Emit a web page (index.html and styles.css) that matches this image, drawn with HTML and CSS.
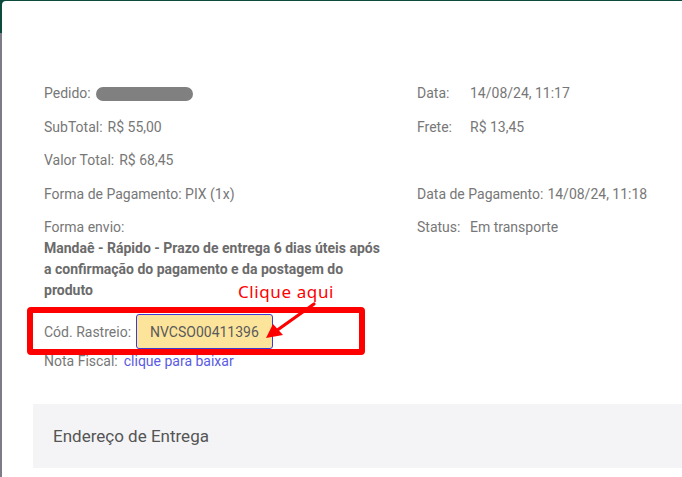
FILE: index.html
```html
<!DOCTYPE html>
<html lang="pt-BR">
<head>
  <meta charset="UTF-8" />
  <meta name="viewport" content="width=device-width, initial-scale=1.0"/>
  <title>Detalhes do Pedido</title>
  <link rel="stylesheet" href="styles.css">
</head>
<body>

  <div class="page">
    <!-- backdrop strip on the left -->
    <div class="backdrop"></div>

    <!-- ===== ORDER MODAL ===== -->
    <div class="modal">

      <div class="info">
        <div class="item">
          <span class="label">Pedido:</span>
          <span class="hidden-value"></span>
        </div>
        <div class="item right">
          <span class="label">Data:</span>
          <span>14/08/24, 11:17</span>
        </div>

        <div class="item">
          <span class="label">SubTotal:</span>
          <span>R$ 55,00</span>
        </div>
        <div class="item right">
          <span class="label">Frete:</span>
          <span>R$ 13,45</span>
        </div>

        <div class="item">
          <span class="label">Valor Total:</span>
          <span>R$ 68,45</span>
        </div>
        <div class="item right"></div>

        <div class="envio-label">Forma de Pagamento: PIX (1x)</div>
        <div class="item right">
          <span class="label">Data de Pagamento:</span>
          <span>14/08/24, 11:18</span>
        </div>

        <div class="envio">
          Forma envio:<br>
          <strong>Mandaê - Rápido - Prazo de entrega 6 dias úteis após a confirmação do pagamento e da postagem do produto</strong>
        </div>
        <div class="item right">
          <span class="label">Status:</span>
          <span>Em transporte</span>
        </div>
      </div>

      <div class="rastreio">
        <span class="label">Cód. Rastreio:</span>
        <button class="track-btn">NVCSO00411396</button>

        <!-- annotation over the screenshot -->
        <div class="highlight-box"></div>
        <span class="hint">Clique aqui</span>
        <svg class="hint-arrow" width="60" height="45" viewBox="0 0 60 45">
          <line x1="52" y1="3" x2="14" y2="30" stroke="#ff0000" stroke-width="3.2" stroke-linecap="round"/>
          <polygon points="4,37 11,23 21,34" fill="#ff0000"/>
        </svg>
      </div>

      <div class="item nota">
        <span class="label">Nota Fiscal:</span>
        <a href="#">clique para baixar</a>
      </div>

      <div class="section-title">Endereço de Entrega</div>
    </div>
  </div>

</body>
</html>
```

FILE: styles.css
```css
* {
  box-sizing: border-box;
  margin: 0;
  padding: 0;
}

body {
  font-family: Roboto, 'Liberation Sans', sans-serif;
  font-size: 14px;
  color: #777;
  background: #0b4a3c;
  height: 100vh;
  overflow: hidden;
}

.page {
  display: flex;
  height: 100%;
}

.backdrop {
  width: 2px;
  flex-shrink: 0;
  background: linear-gradient(to bottom, #0b4a3c 33px, #7d7b87 33px);
}

/* ===== MODAL ===== */
.modal {
  flex: 1;
  margin-top: 1px;
  background: white;
  border-radius: 4px 0 0 0;
  padding: 82px 0 0 31px;
}

.info {
  display: grid;
  grid-template-columns: 373px 1fr;
  align-items: start;
  row-gap: 12.5px;
  line-height: 21px;
  padding-left: 11px;
}

.item {
  display: flex;
  align-items: center;
  gap: 5px;
  white-space: nowrap;
}

.item.right {
  gap: 4px;
}

.item.right .label {
  min-width: 49px;
}

.hidden-value {
  display: inline-block;
  width: 97px;
  height: 14px;
  border-radius: 7px;
  background: #808080;
}

.envio {
  width: 340px;
}

.envio strong {
  color: #6b6b6b;
  font-weight: bold;
}

/* ===== TRACKING ROW ===== */
.rastreio {
  position: relative;
  display: flex;
  align-items: center;
  gap: 5px;
  margin: 13px 0 0 11px;
  height: 35px;
}

.track-btn {
  height: 35px;
  padding: 0 13px;
  background: #fde49b;
  border: 1px solid #3c3cd4;
  border-radius: 3px;
  font-family: Roboto, 'Liberation Sans', sans-serif;
  font-size: 14px;
  color: #5a5a5a;
  cursor: pointer;
}

.highlight-box {
  position: absolute;
  left: -17px;
  top: -7px;
  width: 338px;
  height: 48px;
  border: 6px solid #ff0000;
  border-radius: 4px;
}

.hint {
  position: absolute;
  left: 194px;
  top: -31px;
  font-family: 'Noto Sans', 'DejaVu Sans', sans-serif;
  font-size: 17px;
  letter-spacing: 0.6px;
  color: #ff0000;
  line-height: 18px;
}

.hint-arrow {
  position: absolute;
  left: 218px;
  top: -13px;
}

.nota {
  margin: 1.5px 0 0 11px;
  line-height: 21px;
  gap: 6px;
}

.nota a {
  color: #5a5ae4;
  text-decoration: none;
}

/* ===== ADDRESS SECTION ===== */
.section-title {
  margin-top: 32.5px;
  height: 64px;
  display: flex;
  align-items: center;
  padding-left: 20px;
  background: #f4f4f6;
  font-size: 17px;
  color: #555;
}
```
